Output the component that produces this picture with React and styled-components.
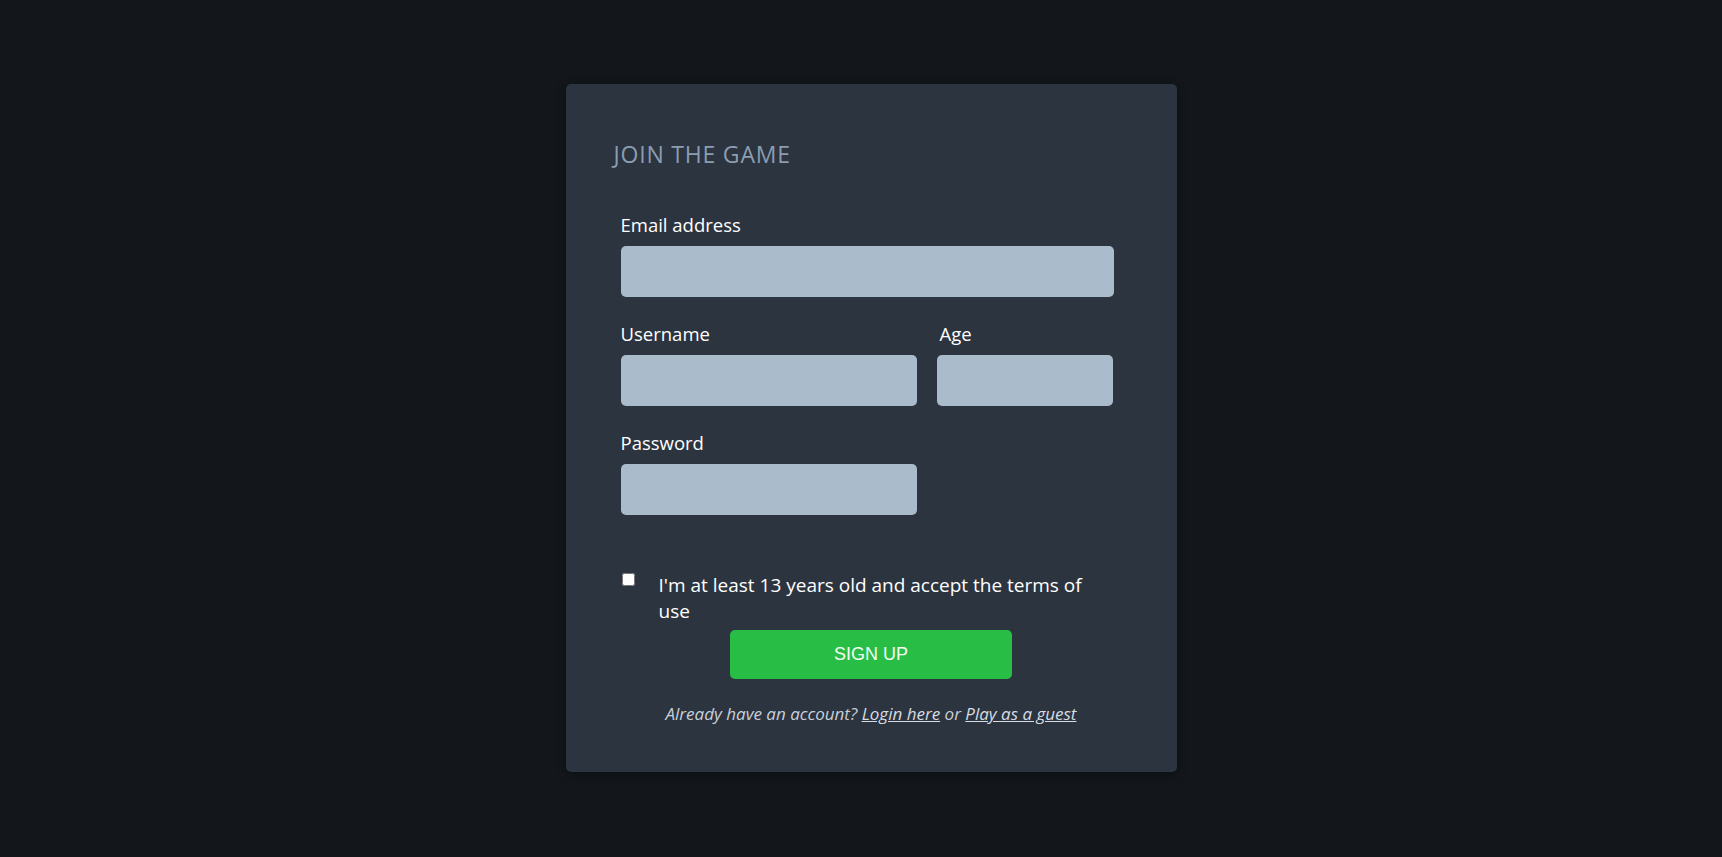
import React, { useState } from 'react';
import styled, { createGlobalStyle } from 'styled-components';

const GlobalStyle = createGlobalStyle`
  html, body {
    margin: 0;
    padding: 0;
    background: #13171c;
  }
  * {
    box-sizing: border-box;
  }
`;

const Page = styled.div`
  min-height: 100vh;
  display: flex;
  justify-content: center;
  align-items: flex-start;
  padding: 84px 0 0 20px;
  font-family: "Open Sans", "Liberation Sans", sans-serif;
`;

const Card = styled.div`
  width: 611px;
  background: #2c3440;
  border-radius: 5px;
  box-shadow: 0 2px 10px rgba(0, 0, 0, 0.45);
  padding: 55px 48px 46px 48px;
`;

const Title = styled.h3`
  margin: 0 0 44px 0;
  font-size: 23px;
  line-height: 30px;
  font-weight: 400;
  color: #8b9db0;
  letter-spacing: 0.8px;
`;

const Fields = styled.div`
  display: flex;
  flex-direction: column;
  gap: 25px;
  padding: 0 15px 0 7px;
`;

const Row = styled.div`
  display: flex;
  gap: 20px;
`;

const Field = styled.div`
  display: flex;
  flex-direction: column;
  gap: 9px;
  width: ${props => props.width || '100%'};
`;

const Label = styled.label`
  font-size: 18.5px;
  line-height: 24px;
  color: #ffffff;
  padding-left: ${props => (props.indent ? '3px' : '0')};
`;

const Input = styled.input`
  height: 51px;
  width: 100%;
  border: none;
  border-radius: 5px;
  background: #aabbcc;
  padding: 0 12px;
  font-size: 16px;
  outline: none;
`;

const Terms = styled.div`
  display: flex;
  align-items: flex-start;
  gap: 24px;
  margin: 57px 0 0 7px;
  padding-right: 15px;
`;

const Check = styled.input`
  width: 13px;
  height: 13px;
  margin: 1px 0 0 1px;
  flex-shrink: 0;
`;

const TermsText = styled.span`
  font-size: 19px;
  line-height: 26px;
  color: #ffffff;
  max-width: 430px;
`;

const Actions = styled.div`
  display: flex;
  flex-direction: column;
  align-items: center;
  gap: 23px;
  margin-top: 6px;
`;

const SignUpButton = styled.button`
  width: 282px;
  height: 49px;
  border: none;
  border-radius: 5px;
  background: #28bd45;
  color: #f2fff4;
  font-family: "Liberation Sans", Arial, sans-serif;
  font-size: 18px;
  cursor: pointer;
`;

const Footer = styled.p`
  margin: 0;
  font-size: 17px;
  line-height: 24px;
  font-style: italic;
  color: #c9d0d8;
`;

const FooterLink = styled.a`
  color: #d6dce2;
  text-decoration: underline;
  cursor: pointer;
`;

const App = () => {
  const [accepted, setAccepted] = useState(false);

  return (
    <>
      <GlobalStyle />
      <Page>
        <Card>
          <Title>JOIN THE GAME</Title>
          <Fields>
            <Field>
              <Label>Email address</Label>
              <Input type="email" />
            </Field>
            <Row>
              <Field width="296px">
                <Label>Username</Label>
                <Input type="text" />
              </Field>
              <Field width="176px">
                <Label indent>Age</Label>
                <Input type="number" />
              </Field>
            </Row>
            <Field width="296px">
              <Label>Password</Label>
              <Input type="password" />
            </Field>
          </Fields>
          <Terms>
            <Check
              type="checkbox"
              checked={accepted}
              onChange={() => setAccepted(!accepted)}
            />
            <TermsText>I'm at least 13 years old and accept the terms of use</TermsText>
          </Terms>
          <Actions>
            <SignUpButton>SIGN UP</SignUpButton>
            <Footer>
              Already have an account? <FooterLink>Login here</FooterLink> or{' '}
              <FooterLink>Play as a guest</FooterLink>
            </Footer>
          </Actions>
        </Card>
      </Page>
    </>
  );
};

export default App;
